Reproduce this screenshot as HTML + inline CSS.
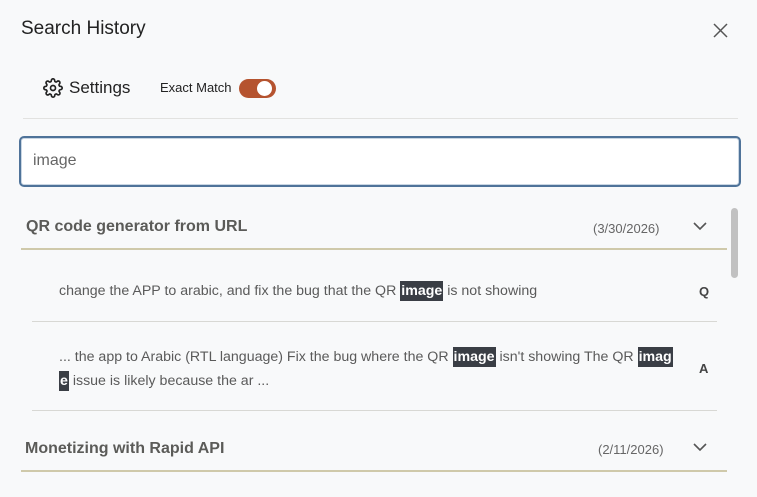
<!DOCTYPE html>
<html><head><meta charset="utf-8"><style>
body{margin:0;width:757px;height:497px;background:#f8f9fa;font-family:"Liberation Sans",sans-serif;position:relative;overflow:hidden;color:#222}
.a{position:absolute;white-space:nowrap}
.hl{background:#3a3e45;color:#fff;padding:2px 1px;font-weight:bold}
.hd{font-weight:bold;font-size:16px;color:#5b5b58}
.dt{font-size:13px;color:#666}
.tx{font-size:14.2px;color:#5a5a5a}
.line{position:absolute;height:2px;background:#cfc9aa}
.sep{position:absolute;height:1px;background:#d8d8d4}
</style></head><body>
<div class="a" style="left:21px;top:18px;font-size:19px;color:#222">Search History</div>
<svg class="a" style="left:713px;top:23px" width="15" height="15" viewBox="0 0 15 15"><path d="M1 1L14 14M14 1L1 14" stroke="#555" stroke-width="1.5"/></svg>
<svg class="a" style="left:43px;top:78px" width="20" height="20" viewBox="0 0 24 24" fill="none" stroke="#222" stroke-width="2"><circle cx="12" cy="12" r="3"/><path d="M19.4 15a1.65 1.65 0 0 0 .33 1.82l.06.06a2 2 0 1 1-2.83 2.83l-.06-.06a1.65 1.65 0 0 0-1.82-.33 1.65 1.65 0 0 0-1 1.51V21a2 2 0 1 1-4 0v-.09A1.65 1.650 0 0 0 9 19.4a1.65 1.65 0 0 0-1.82.33l-.06.06a2 2 0 1 1-2.830-2.83l.06-.06a1.65 1.65 0 0 0 .33-1.82 1.65 1.65 0 0 0-1.51-1H3a2 2 0 1 1 0-4h.09A1.65 1.65 0 0 0 4.6 9a1.65 1.65 0 0 0-.33-1.82l-.06-.06a2 2 0 1 1 2.83-2.83l.06.06a1.65 1.65 0 0 0 1.82.33H9a1.65 1.65 0 0 0 1-1.51V3a2 2 0 1 1 4 0v.09a1.65 1.65 0 0 0 1 1.51 1.65 1.65 0 0 0 1.82-.33l.06-.06a2 2 0 1 1 2.83 2.83l-.06.06a1.65 1.65 0 0 0-.33 1.82V9a1.65 1.65 0 0 0 1.51 1H21a2 2 0 1 1 0 4h-.09a1.65 1.65 0 0 0-1.51 1z"/></svg>
<div class="a" style="left:69px;top:78px;font-size:17px;color:#222">Settings</div>
<div class="a" style="left:160px;top:80px;font-size:13px;color:#222">Exact Match</div>
<div class="a" style="left:239px;top:79px;width:37px;height:19px;border-radius:10px;background:#b5532f"></div>
<div class="a" style="left:257px;top:81px;width:15px;height:15px;border-radius:50%;background:#fff"></div>
<div class="sep" style="left:23px;top:118px;width:715px;background:#e2e2e0"></div>
<div class="a" style="left:19px;top:136px;width:718px;height:47px;border:2px solid #4f7399;border-radius:5px;background:#fff;box-shadow:inset 0 0 0 1px #c9d6e3"></div>
<div class="a" style="left:33px;top:152px;font-size:16px;color:#666">image</div>
<div class="a" style="left:731px;top:208px;width:7px;height:70px;border-radius:4px;background:#c1c1c1"></div>
<div class="a hd" style="left:26px;top:218px">QR code generator from URL</div>
<div class="a dt" style="left:593px;top:221px">(3/30/2026)</div>
<svg class="a" style="left:693px;top:222px" width="14" height="9" viewBox="0 0 14 9"><path d="M1 1L7 7L13 1" stroke="#555" stroke-width="1.6" fill="none"/></svg>
<div class="line" style="left:21px;top:248px;width:706px"></div>
<div class="a tx" style="left:59px;top:283px">change the APP to arabic, and fix the bug that the QR <span class="hl">image</span> is not showing</div>
<div class="a" style="left:699px;top:284px;font-size:13px;font-weight:bold;color:#444">Q</div>
<div class="sep" style="left:32px;top:321px;width:685px"></div>
<div class="a tx" style="left:59px;top:349px">... the app to Arabic (RTL language) Fix the bug where the QR <span class="hl">image</span> isn't showing The QR <span class="hl">imag</span></div>
<div class="a tx" style="left:59px;top:373px"><span class="hl">e</span> issue is likely because the ar ...</div>
<div class="a" style="left:699px;top:361px;font-size:13px;font-weight:bold;color:#444">A</div>
<div class="sep" style="left:32px;top:410px;width:685px"></div>
<div class="a hd" style="left:25px;top:440px">Monetizing with Rapid API</div>
<div class="a dt" style="left:598px;top:442px">(2/11/2026)</div>
<svg class="a" style="left:693px;top:443px" width="14" height="9" viewBox="0 0 14 9"><path d="M1 1L7 7L13 1" stroke="#555" stroke-width="1.6" fill="none"/></svg>
<div class="line" style="left:21px;top:470px;width:706px"></div>
</body></html>
